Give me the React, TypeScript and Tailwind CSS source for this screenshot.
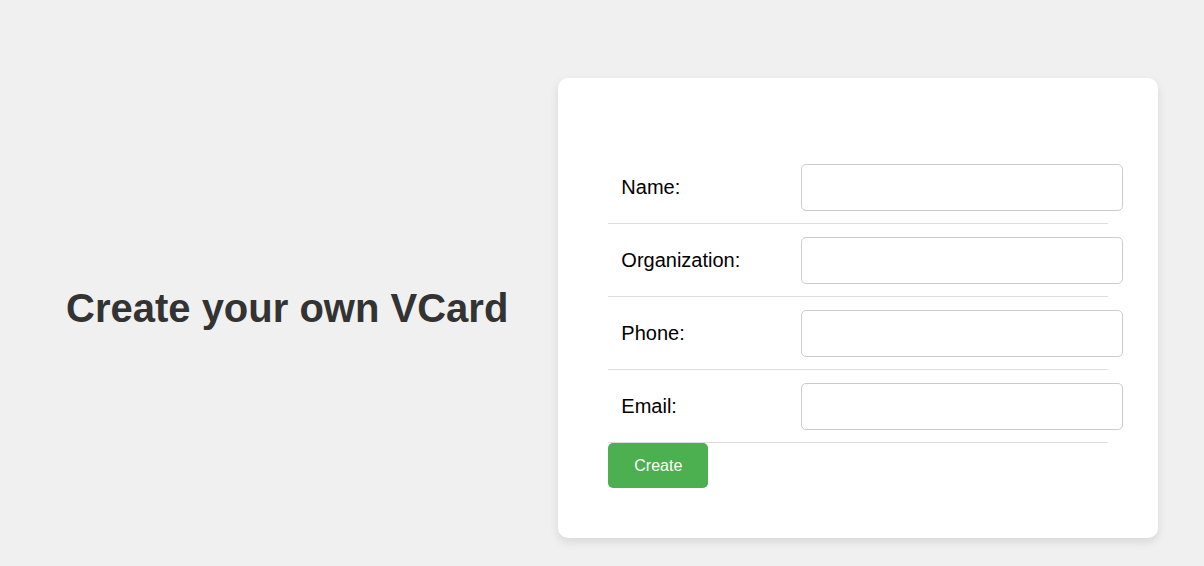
import React from "react"

const fields = ["Name:", "Organization:", "Phone:", "Email:"]

export default function App() {
  return (
    <div className="min-h-screen bg-[#f0f0f0] font-['Liberation_Sans',Arial,sans-serif]">
      <div className="flex items-center gap-[50px] pl-[66px] pt-[78px]">
        <h1 className="text-[40px] font-bold leading-none text-[#333]">
          Create your own VCard
        </h1>
        <div className="w-[600px] rounded-[10px] bg-white px-[50px] pt-[73px] pb-[50px] shadow-[0_4px_10px_rgba(0,0,0,0.1)]">
          <div className="w-[500px]">
            {fields.map((label) => (
              <div
                key={label}
                className="flex h-[73px] items-center border-b border-[#ddd]"
              >
                <label className="w-[193px] shrink-0 pl-[13px] text-[20px] text-black">
                  {label}
                </label>
                <input
                  type="text"
                  className="h-[47px] w-[322px] shrink-0 rounded-[5px] border border-[#ccc] bg-white outline-none"
                />
              </div>
            ))}
          </div>
          <button className="h-[45px] w-[100px] rounded-[5px] bg-[#4caf50] text-[16px] text-white">
            Create
          </button>
        </div>
      </div>
    </div>
  )
}
